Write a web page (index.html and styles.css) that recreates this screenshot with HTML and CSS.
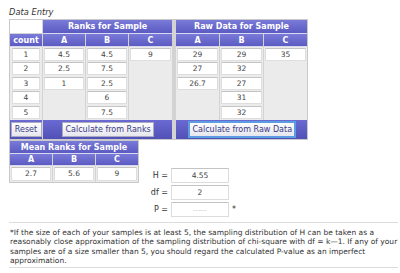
FILE: index.html
```html
<!DOCTYPE html>
<html>
<head>
<meta charset="utf-8">
<link rel="stylesheet" href="styles.css">
</head>
<body>
<div class="page">
  <div class="title">Data Entry</div>
  <div class="entry">
    <div class="blank"></div>
    <div class="hd span3">Ranks for Sample</div>
    <div class="sep"></div>
    <div class="hd span3">Raw Data for Sample</div>

    <div class="hd">count</div>
    <div class="hd">A</div>
    <div class="hd">B</div>
    <div class="hd">C</div>
    <div class="hd">A</div>
    <div class="hd">B</div>
    <div class="hd">C</div>

    <div class="cell"><span class="in in-count">1</span></div>
    <div class="cell"><span class="in">4.5</span></div>
    <div class="cell"><span class="in">4.5</span></div>
    <div class="cell"><span class="in">9</span></div>
    <div class="cell"><span class="in">29</span></div>
    <div class="cell"><span class="in">29</span></div>
    <div class="cell"><span class="in">35</span></div>

    <div class="cell"><span class="in in-count">2</span></div>
    <div class="cell"><span class="in">2.5</span></div>
    <div class="cell"><span class="in">7.5</span></div>
    <div class="cell"></div>
    <div class="cell"><span class="in">27</span></div>
    <div class="cell"><span class="in">32</span></div>
    <div class="cell"></div>

    <div class="cell"><span class="in in-count">3</span></div>
    <div class="cell"><span class="in">1</span></div>
    <div class="cell"><span class="in">2.5</span></div>
    <div class="cell"></div>
    <div class="cell"><span class="in">26.7</span></div>
    <div class="cell"><span class="in">27</span></div>
    <div class="cell"></div>

    <div class="cell"><span class="in in-count">4</span></div>
    <div class="cell"></div>
    <div class="cell"><span class="in">6</span></div>
    <div class="cell"></div>
    <div class="cell"></div>
    <div class="cell"><span class="in">31</span></div>
    <div class="cell"></div>

    <div class="cell"><span class="in in-count">5</span></div>
    <div class="cell"></div>
    <div class="cell"><span class="in">7.5</span></div>
    <div class="cell"></div>
    <div class="cell"></div>
    <div class="cell"><span class="in">32</span></div>
    <div class="cell"></div>

    <div class="bar"><span class="btn btn-reset">Reset</span></div>
    <div class="bar span3"><span class="btn btn-ranks">Calculate from Ranks</span></div>
    <div class="bar span3"><span class="btn btn-raw">Calculate from Raw Data</span></div>
  </div>

  <div class="results">
    <div class="mean">
      <div class="hd span3">Mean Ranks for Sample</div>
      <div class="hd">A</div>
      <div class="hd">B</div>
      <div class="hd">C</div>
      <div class="cell"><span class="in">2.7</span></div>
      <div class="cell"><span class="in">5.6</span></div>
      <div class="cell"><span class="in">9</span></div>
    </div>
    <div class="stats">
      <span class="lbl">H =</span><span class="out">4.55</span><span></span>
      <span class="lbl">df =</span><span class="out">2</span><span></span>
      <span class="lbl">P =</span><span class="out dash">-----</span><span class="ast">*</span>
    </div>
  </div>

  <div class="rule"></div>
  <p class="note">*If the size of each of your samples is at least 5, the sampling distribution of H can be taken as a<br>reasonably close approximation of the sampling distribution of chi-square with df = k&mdash;1. If any of your<br>samples are of a size smaller than 5, you should regard the calculated P-value as an imperfect<br>approximation.</p>
  <div class="rule rule-end"></div>
</div>
</body>
</html>
```
FILE: styles.css
```css
body {
  margin: 0;
  background: #fff;
  color: #333;
  font-family: "DejaVu Sans", Verdana, sans-serif;
}
.page {
  padding: 6px 0 0 9px;
  width: 389px;
}
.title {
  font-style: italic;
  font-size: 8.3px;
  line-height: 13px;
  height: 13px;
  color: #333;
}
.entry {
  display: grid;
  width: 297px;
  border: 1px solid #c9c9c9;
  background: #d3d3d3;
  grid-template-columns: 32px 42px 42px 43px 2px 43px 43px 43px;
  grid-template-rows: 14px 13px repeat(5, 14.5px) 19.5px;
  column-gap: 1px;
}
.span3 { grid-column: span 3; }
.blank {
  background: #fff;
  border-bottom: 1px solid #d3d3d3;
}
.sep {
  grid-column: 5;
  grid-row: 1 / span 8;
  background: #d3d3d3;
}
.hd {
  background: linear-gradient(#7a7ad9, #5b5bc2);
  color: #fff;
  font-weight: bold;
  font-size: 8px;
  display: flex;
  align-items: center;
  justify-content: center;
  border-bottom: 1px solid #d8d8ee;
}
.cell {
  background: #ebebeb;
  display: flex;
  align-items: center;
  justify-content: center;
}
.in {
  box-sizing: border-box;
  flex: 1;
  height: 13px;
  margin: 0 1px;
  background: #fff;
  border: 1px solid #dedede;
  border-top-color: #c4c4c4;
  font-size: 7.5px;
  line-height: 11px;
  text-align: center;
  color: #444;
}
.in-count { margin: 0 2px; }
.bar {
  background: linear-gradient(#6a6ad2, #5050b6);
  display: flex;
  align-items: center;
  justify-content: center;
}
.btn {
  box-sizing: border-box;
  height: 15px;
  line-height: 13px;
  font-size: 8px;
  color: #3a3a88;
  background: linear-gradient(#fdfdfd, #e6e6ee);
  border: 1px solid #a9a9c0;
  padding: 0 3px;
  white-space: nowrap;
}
.btn-reset { width: 31px; padding: 0; text-align: center; }
.btn-ranks { width: 92px; text-align: center; }
.btn-raw {
  height: 17px;
  line-height: 13px;
  width: 108px;
  text-align: center;
  border: 2px solid #5b9de0;
}
.results {
  display: flex;
  align-items: flex-start;
}
.mean {
  display: grid;
  width: 128px;
  border: 1px solid #c9c9c9;
  background: #d3d3d3;
  grid-template-columns: 42px 42px 42px;
  grid-template-rows: 13px 12px 16px;
  column-gap: 1px;
}
.mean .in { height: 14px; line-height: 12px; }
.stats {
  margin: 28px 0 0 1px;
  display: grid;
  grid-template-columns: 28px 58px 10px;
  grid-auto-rows: 15px;
  column-gap: 3px;
  row-gap: 2px;
  align-items: center;
}
.lbl {
  font-size: 8px;
  text-align: right;
  color: #333;
}
.out {
  box-sizing: border-box;
  height: 15px;
  border: 1px solid #dcdcdc;
  border-top-color: #c4c4c4;
  background: #fff;
  font-size: 7.5px;
  line-height: 13px;
  text-align: center;
  color: #444;
}
.dash { color: #aaa; font-size: 6px; letter-spacing: 0.5px; }
.ast { font-size: 8px; color: #333; }
.rule {
  margin-top: 5px;
  border-top: 1px solid #dcdcdc;
  width: 389px;
}
.note {
  margin: 0;
  padding: 5px 0 0 1px;
  font-size: 7.5px;
  line-height: 9.3px;
  color: #333;
  white-space: nowrap;
}
.rule-end { margin-top: 2px; }
```
